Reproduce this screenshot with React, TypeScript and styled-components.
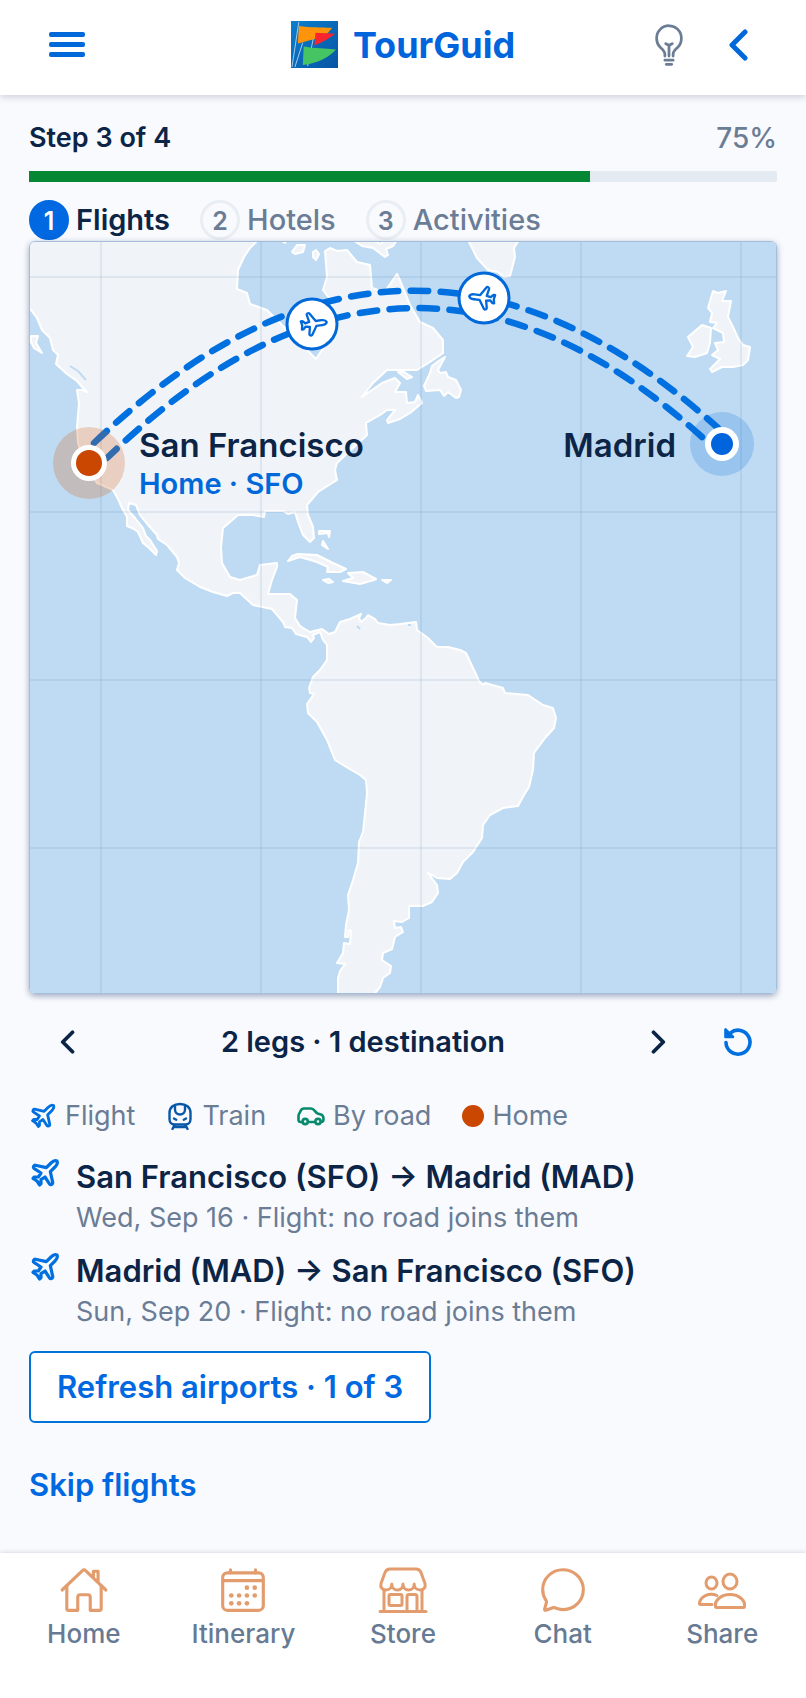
import React, { useState } from "react";
import styled, { createGlobalStyle } from "styled-components";
import { Plane } from "lucide-react";
import { IoBulbOutline, IoCalendarOutline, IoChatbubbleOutline, IoHomeOutline } from "react-icons/io5";

type Leg = { id: number; from: string; to: string; note: string };

const LEGS: Leg[] = [
  { id: 1, from: "San Francisco (SFO)", to: "Madrid (MAD)", note: "Wed, Sep 16 · Flight: no road joins them" },
  { id: 2, from: "Madrid (MAD)", to: "San Francisco (SFO)", note: "Sun, Sep 20 · Flight: no road joins them" },
];

const STEPS = ["Flights", "Hotels", "Activities"];

const NAV = [
  { label: "Home", Icon: IoHomeOutline },
  { label: "Itinerary", Icon: IoCalendarOutline },
  { label: "Store", Icon: StoreIcon },
  { label: "Chat", Icon: IoChatbubbleOutline },
  { label: "Share", Icon: PeopleIcon },
];

const AMERICAS =
  "M28 240V308L31 310 37 318 42 330 50 338 53 350 58 355 56 364 67 374 77 381 83 388 87 392 83 390 77 390 79 403 78 415 77 427 78 443 82 456 87 470 97 483 102 485 113 490 118 499 122 508 127 517 127 526 134 529 138 532 143 543 149 548 156 555 157 551 150 540 146 536 143 528 135 518 128 510 129 503 136 505 140 515 148 525 157 535 158 539 167 545 177 557 179 563 177 570 185 578 200 587 213 592 227 596 233 593 240 593 253 605 272 609 283 622 285 627 292 628 296 634 307 637 311 642 314 638 313 635 320 632 323 640 327 645 327 660 320 670 313 677 309 688 310 693 314 694 307 704 308 713 317 722 327 740 335 760 348 768 360 775 366 780 367 793 365 813 363 832 359 842 358 863 353 880 348 895 349 910 346 925 345 937 348 937 349 930 351 931 350 944 344 943 343 953 337 963 345 964 340 971 338 978 338 998H371L380 987 383 978 390 973 391 966 382 960 383 953 392 949 395 937 403 932 401 927 395 928 394 921 402 922 409 918 409 906 423 906 432 902 438 893 437 885 428 873 437 878 450 879 457 873 463 862 473 852 482 838 483 825 490 815 503 808 518 806 524 795 529 787 533 770 534 753 545 738 554 728 556 718 553 708 543 705 528 695 505 693 503 688 485 683 483 685 479 681 474 670 466 653 460 650 448 647 437 647 428 638 417 630 416 622 400 624 390 625 378 623 375 619 368 615 366 618 361 622 359 618 361 614 350 619 340 622 335 632 329 634 322 629 310 632 300 626 295 618 297 600 290 594 268 594 272 580 277 567 277 563 260 565 257 575 240 580 230 577 222 563 221 547 223 528 230 522 238 515 253 515 264 517 265 511 283 511 288 514 295 512 298 522 303 535 310 542 314 538 313 527 308 515 307 505 318 492 337 480 335 470 337 463 353 448 367 435 366 423 380 415 387 410 395 410 387 420 388 423 400 419 410 413 422 403 418 395 415 402 407 403 406 392 395 392 400 383 395 378 382 383 362 397 373 383 387 370 417 370 430 362 443 353 443 340 433 328 420 322 410 305 400 280 397 274 388 287 384 292 372 288 370 265 357 262 347 250 337 251 330 248 325 251 327 277 323 290 332 302 330 325 322 350 316 359 310 353 303 345 287 330 267 310 250 304 247 293 237 289 238 270 244 257 250 248 258 240Z";

const ISLANDS = [
  "M292 252 297 245 305 245 303 252 295 254Z",
  "M313 252 316 250 319 254 316 260 313 257Z",
  "M281 240H287L285 243Z",
  "M353 240 362 246 373 248 385 257 388 255 386 249 393 246 397 240H386L380 244 374 240Z",
  "M31 336 38 336 36 343 42 353 34 348 31 342Z",
  "M445 357 440 360 432 366 430 373 424 386 426 391 440 390 444 396 448 392 456 398 459 397 461 390 456 380 448 377 446 372 440 373 438 370Z",
  "M398 372 404 372 412 377 407 379Z",
  "M468 240 477 258 488 270 498 272 504 277 510 276 515 257 514 248 519 240Z",
  "M713 291 718 293 726 291 722 301 731 301 728 317 733 327 738 338 743 345 750 347 748 360 743 365 733 367 722 367 712 372 710 369 720 359 712 355 718 350 715 343 724 342 723 333 713 328 717 323 710 322 712 313 708 308Z",
  "M702 325 711 328 710 343 707 353 695 357 687 356 693 347 688 337Z",
  "M288 561 292 556 298 554 317 555 333 563 346 569 340 572 327 572 328 567 317 562 300 557Z",
  "M348 573 363 572 376 579 374 580 360 584 343 581 353 578Z",
  "M323 580 329 579 333 582 328 583Z",
  "M382 580 391 580 387 583Z",
  "M319 531H330L329 537 328 533 319 534Z",
  "M323 541 328 549 322 545Z",
];

const MERIDIANS = [101, 261, 421, 581, 741];
const PARALLELS = [277, 512, 680, 848];

function TrainIcon({ size }: { size: number }) {
  return (
    <svg width={size} height={size} viewBox="0 0 28 28" fill="none" stroke="#0857a8" strokeWidth="2.4" strokeLinecap="round">
      <path d="M14 2C8 2 3.500 5 3.500 11v6c0 3 2 5.500 5 5.500h11c3 0 5-2.500 5-5.500v-6c0-6-4.500-9-10.500-9Z" />
      <path d="M9 3.500v4a5 5 0 0 0 10 0v-4" />
      <path d="M8 16.500l2.200 1.200M20 16.500l-2.200 1.200M8.500 23 6.500 27M19.500 23l2 4M8 25h12" />
    </svg>
  );
}

function CarIcon({ size }: { size: number }) {
  return (
    <svg width={size} height={size} viewBox="0 0 28 28" fill="none" stroke="#088a6c" strokeWidth="2.600" strokeLinejoin="round">
      <path d="M5 20H3.500C2 20 1.500 19 1.500 17.500V14c0-2 1-2.600 1.700-4.200C4 7.500 4.500 6.500 7 6.500h7c3 0 4 3.500 6.500 5l3.500 1c2 .6 2.500 2 2.500 4.500 0 2-.8 3-2.500 3h-1M11.500 20H18" />
      <circle cx="8.200" cy="19.500" r="2.600" />
      <circle cx="21" cy="19.500" r="2.600" />
    </svg>
  );
}

function StoreIcon({ size }: { size: number }) {
  return (
    <svg width={size} height={size} viewBox="0 0 50 50" fill="none" stroke="currentColor" strokeWidth="3" strokeLinecap="round" strokeLinejoin="round">
      <path d="M12 4h26c2.500 0 4 1 5 3.500l4 11c1 4-1.500 6.500-5 6.500s-5.800-2.500-5.800-6c0 3.500-2.200 6-5.600 6S25 22.500 25 19c0 3.500-2.200 6-5.600 6s-5.600-2.500-5.600-6c0 3.500-2.300 6-5.800 6S2 22.500 3 18.500l4-11C8 5 9.500 4 12 4Z" />
      <path d="M6 25v21M44 25v21M2 46.500h46M29 46V31.500c0-1.500.5-2 2-2h6c1.500 0 2 .5 2 2V46" />
      <rect x="11" y="29.500" width="13" height="11" rx="1.500" />
    </svg>
  );
}

function PeopleIcon({ size }: { size: number }) {
  return (
    <svg width={size} height={size} viewBox="0 0 50 50" fill="none" stroke="currentColor" strokeWidth="3" strokeLinecap="round" strokeLinejoin="round">
      <ellipse cx="14.500" cy="18" rx="5.500" ry="6" />
      <ellipse cx="33" cy="16.500" rx="7" ry="7.500" />
      <path d="M18.500 41.500C17.500 35.500 24 29.500 33 29.500s15.500 6 14.500 12c0 .6-.5 1-1.200 1H19.700c-.7 0-1.200-.4-1.200-1Z" />
      <path d="M20 30.500c-8-3.500-17 1-17.500 8 0 .6.500 1 1.200 1H15" />
    </svg>
  );
}

function Chevron({ size, flip }: { size: number; flip?: boolean }) {
  return (
    <svg width={size} height={size} viewBox="0 0 32 32" fill="none" stroke="currentColor" strokeWidth="5" strokeLinecap="round" strokeLinejoin="round">
      <path d={flip ? "M10 3l13 13-13 13" : "M22 3 9 16l13 13"} />
    </svg>
  );
}

function ResetIcon() {
  return (
    <svg width="32" height="32" viewBox="0 0 32 32" fill="none" stroke="#0070e0" strokeWidth="3.600" strokeLinecap="round">
      <path d="M4 16.500a12 12 0 1 0 4.500-9.700" />
      <path d="M3.500 3.500v7.500H11Z" fill="#0070e0" strokeWidth="2.600" strokeLinejoin="round" />
    </svg>
  );
}

function Logo() {
  return (
    <svg width="47" height="47" viewBox="0 0 48 48">
      <defs>
        <linearGradient id="sky" x1="0" y1="0" x2="1" y2="1">
          <stop offset="0" stopColor="#0a7fcd" />
          <stop offset="1" stopColor="#0754a4" />
        </linearGradient>
      </defs>
      <rect width="48" height="48" fill="url(#sky)" />
      <path d="M8 1 1 47M12 22 4 47M25 7 17 46" stroke="#a9cdee" strokeWidth="1" />
      <path d="M8 5c12 2 22 1 34 2-1 2-3 3-4 5l-13 6L7 23Z" fill="#ff9309" />
      <path d="M25 12l20 1c-6 5-12 8-21 12Z" fill="#f9242e" />
      <path d="M13 26c12 2 22 2 33 3-6 7-18 14-34 16Z" fill="#46c362" />
    </svg>
  );
}

function PlaneBadge({ x, y, angle }: { x: number; y: number; angle: number }) {
  return (
    <g transform={`translate(${x} ${y})`}>
      <circle r="25" fill="#fff" stroke="#0068d9" strokeWidth="3" />
      <g transform={`rotate(${angle})`}>
        <Plane x={-14} y={-14} size={28} color="#0068d9" />
      </g>
    </g>
  );
}

function RouteMap() {
  return (
    <MapFrame>
      <svg viewBox="30 242 746 751" role="img" aria-label="Flight route map">
        <rect x="30" y="242" width="746" height="751" fill="#bfdbf3" />
        <g fill="#f0f4f9" stroke="#fff" strokeWidth="2" strokeLinejoin="round">
          <path d={AMERICAS} />
          {ISLANDS.map(d => (
            <path key={d} d={d} />
          ))}
        </g>
        <path d="M70 366l8 5 8 9M357 626l3 3M408 625h3" stroke="#bfdbf3" strokeWidth="2" fill="none" />
        <g stroke="#5d7ea6" strokeOpacity="0.12" strokeWidth="2">
          {MERIDIANS.map(x => (
            <path key={x} d={`M${x} 242v751`} />
          ))}
          {PARALLELS.map(y => (
            <path key={y} d={`M30 ${y}h746`} />
          ))}
        </g>
        <g fill="none" stroke="#0070e0" strokeWidth="6.500" strokeLinecap="round" strokeDasharray="17.500 12.500">
          <path d="M94 443Q405 146 718 428" />
          <path d="M702 437Q405 169 107 458" />
        </g>
        <circle cx="89" cy="463" r="36" fill="#d15a10" fillOpacity="0.24" />
        <circle cx="89" cy="463" r="18" fill="#fff" />
        <circle cx="89" cy="463" r="13" fill="#c94700" />
        <circle cx="722" cy="444" r="32" fill="#0068d9" fillOpacity="0.2" />
        <circle cx="722" cy="444" r="17" fill="#fff" />
        <circle cx="722" cy="444" r="11" fill="#0064dc" />
        <PlaneBadge x={312} y={324} angle={37} />
        <PlaneBadge x={484} y={298} angle={232} />
        <MapLabel x="139" y="457">
          San Francisco
        </MapLabel>
        <MapLabel x="139" y="494" $sub>
          Home · SFO
        </MapLabel>
        <MapLabel x="676" y="457" textAnchor="end">
          Madrid
        </MapLabel>
      </svg>
    </MapFrame>
  );
}

function App() {
  const [step, setStep] = useState(0);

  return (
    <Page>
      <GlobalStyle />
      <Header>
        <IconButton aria-label="Menu">
          <MenuBars>
            <i />
            <i />
            <i />
          </MenuBars>
        </IconButton>
        <Brand href="#">
          <Logo />
          TourGuid
        </Brand>
        <HeaderActions>
          <IconButton aria-label="Tips" $muted>
            <IoBulbOutline size={44} />
          </IconButton>
          <IconButton aria-label="Back">
            <Chevron size={32} />
          </IconButton>
        </HeaderActions>
      </Header>

      <Main>
        <ProgressText>
          <strong>Step 3 of 4</strong>
          <span>75%</span>
        </ProgressText>
        <Track>
          <Bar />
        </Track>

        <Steps>
          {STEPS.map((name, index) => (
            <StepButton key={name} $active={index === step} onClick={() => setStep(index)}>
              <b>{index + 1}</b>
              {name}
            </StepButton>
          ))}
        </Steps>

        <RouteMap />

        <Pager>
          <IconButton aria-label="Previous leg" $dark>
            <Chevron size={24} />
          </IconButton>
          <PagerText>2 legs · 1 destination</PagerText>
          <IconButton aria-label="Next leg" $dark>
            <Chevron size={24} flip />
          </IconButton>
          <IconButton aria-label="Reset map">
            <ResetIcon />
          </IconButton>
        </Pager>

        <Legend>
          <li>
            <PlaneIcon size={28} />
            Flight
          </li>
          <li>
            <TrainIcon size={28} />
            Train
          </li>
          <li>
            <CarIcon size={28} />
            By road
          </li>
          <li>
            <HomeDot />
            Home
          </li>
        </Legend>

        <LegList>
          {LEGS.map(leg => (
            <LegItem key={leg.id}>
              <PlaneIcon size={32} />
              <div>
                <LegTitle>
                  {leg.from} → {leg.to}
                </LegTitle>
                <LegNote>{leg.note}</LegNote>
              </div>
            </LegItem>
          ))}
        </LegList>

        <RefreshButton>Refresh airports · 1 of 3</RefreshButton>
        <SkipButton>Skip flights</SkipButton>
      </Main>

      <Nav>
        {NAV.map(({ label, Icon }) => (
          <NavLink key={label} href="#">
            <Icon size={50} />
            {label}
          </NavLink>
        ))}
      </Nav>
    </Page>
  );
}

const GlobalStyle = createGlobalStyle`
  * {
    box-sizing: border-box;
  }

  body {
    margin: 0;
    background-color: #f8fafe;
    font-family: Inter, "Liberation Sans", sans-serif;
    color: #0c2547;
  }

  button {
    font-family: inherit;
    color: inherit;
    cursor: pointer;
  }

  a {
    text-decoration: none;
  }
`;

const Page = styled.div`
  min-height: 100vh;
  display: flex;
  flex-direction: column;
`;

const Header = styled.header`
  height: 95px;
  padding: 0 40px 6px;
  display: grid;
  grid-template-columns: 1fr auto 1fr;
  align-items: center;
  background-color: #fff;
  box-shadow: 0 1px 8px rgba(20, 35, 60, 0.24);
`;

const IconButton = styled.button<{ $muted?: boolean; $dark?: boolean }>`
  width: 54px;
  height: 54px;
  padding: 0;
  display: flex;
  align-items: center;
  justify-content: center;
  border: none;
  background-color: transparent;
  color: ${props => (props.$muted ? "#6b7c95" : props.$dark ? "#0c2547" : "#0068d9")};
`;

const MenuBars = styled.span`
  width: 36px;
  display: flex;
  flex-direction: column;
  gap: 5px;

  i {
    height: 5px;
    border-radius: 2px;
    background-color: #0068d9;
  }
`;

const Brand = styled.a`
  display: flex;
  align-items: center;
  gap: 15px;
  font-size: 36px;
  line-height: 48px;
  font-weight: 700;
  color: #0064dc;
`;

const HeaderActions = styled.div`
  display: flex;
  justify-content: flex-end;
  gap: 16px;
`;

const Main = styled.main`
  flex: 1;
  padding: 24px 29px 0;
  display: flex;
  flex-direction: column;
`;

const ProgressText = styled.div`
  display: flex;
  justify-content: space-between;
  font-size: 28px;
  line-height: 38px;
  font-weight: 500;
  color: #6b7c95;

  strong {
    font-size: 27px;
    font-weight: 600;
    color: #0c2547;
  }
`;

const Track = styled.div`
  height: 11px;
  margin-top: 14px;
  border-radius: 2px;
  background-color: #e4eaf1;
`;

const Bar = styled.div`
  width: 75%;
  height: 100%;
  background-color: #058733;
`;

const Steps = styled.div`
  margin-top: 17px;
  display: flex;
  gap: 30px;
`;

const StepButton = styled.button<{ $active: boolean }>`
  padding: 0;
  display: flex;
  align-items: center;
  gap: 7px;
  border: none;
  background-color: transparent;
  font-size: 29px;
  line-height: 42px;
  font-weight: ${props => (props.$active ? 600 : 500)};
  color: ${props => (props.$active ? "#0c2547" : "#6b7c95")};

  b {
    width: 40px;
    height: 40px;
    border: 3px solid ${props => (props.$active ? "#0068e0" : "#e9eef4")};
    border-radius: 50%;
    background-color: ${props => (props.$active ? "#0068e0" : "transparent")};
    font-size: 25px;
    line-height: 36px;
    font-weight: 600;
    color: ${props => (props.$active ? "#fff" : "#6b7c95")};
  }
`;

const MapFrame = styled.div`
  border: 1px solid #a3bddb;
  border-radius: 6px;
  overflow: hidden;
  box-shadow: 0 2px 6px rgba(20, 45, 90, 0.4);

  > svg {
    display: block;
    width: 100%;
    height: auto;
  }
`;

const MapLabel = styled.text<{ $sub?: boolean }>`
  font-size: ${props => (props.$sub ? 29 : 33)}px;
  font-weight: 600;
  fill: ${props => (props.$sub ? "#0068d9" : "#0c2547")};
`;

const Pager = styled.div`
  height: 96px;
  padding: 0 12px;
  display: flex;
  align-items: center;
  gap: 26px;
`;

const PagerText = styled.p`
  flex: 1;
  margin: 0;
  font-size: 29px;
  line-height: 36px;
  font-weight: 600;
  text-align: center;
`;

const Legend = styled.ul`
  margin: 8px 0 0;
  padding: 0;
  display: flex;
  gap: 31px;
  list-style: none;
  font-size: 27px;
  line-height: 36px;
  color: #6b7c95;

  li {
    display: flex;
    align-items: center;
    gap: 8px;
  }
`;

const PlaneIcon = styled(Plane)`
  flex: none;
  color: #0070e0;
  stroke-width: 2.4px;
`;

const HomeDot = styled.span`
  width: 22px;
  height: 22px;
  border-radius: 50%;
  background-color: #c94700;
`;

const LegList = styled.ul`
  margin: 23px 0 0;
  padding: 0;
  display: flex;
  flex-direction: column;
  gap: 14px;
  list-style: none;
`;

const LegItem = styled.li`
  display: flex;
  gap: 15px;
`;

const LegTitle = styled.h2`
  margin: 0;
  font-size: 31px;
  line-height: 40px;
  font-weight: 600;
`;

const LegNote = styled.p`
  margin: 2px 0 0;
  font-size: 27px;
  line-height: 38px;
  color: #6b7c95;
`;

const RefreshButton = styled.button`
  align-self: flex-start;
  margin-top: 20px;
  padding: 16px 26px;
  border: 2px solid #0073d9;
  border-radius: 6px;
  background-color: #fff;
  font-size: 31px;
  line-height: 36px;
  font-weight: 600;
  color: #0068e0;
`;

const SkipButton = styled.button`
  align-self: flex-start;
  margin: 42px 0 47px;
  padding: 0;
  border: none;
  background-color: transparent;
  font-size: 31px;
  line-height: 40px;
  font-weight: 600;
  color: #0068e0;
`;

const Nav = styled.nav`
  height: 145px;
  padding: 12px 4px 0;
  display: grid;
  grid-template-columns: repeat(5, 1fr);
  background-color: #fff;
  box-shadow: 0 0 5px rgba(20, 35, 60, 0.2);
`;

const NavLink = styled.a`
  display: flex;
  flex-direction: column;
  align-items: center;
  gap: 1px;
  font-size: 26px;
  line-height: 36px;
  font-weight: 500;
  color: #667a93;

  svg {
    color: #e39c6e;
  }
`;

export default App;
